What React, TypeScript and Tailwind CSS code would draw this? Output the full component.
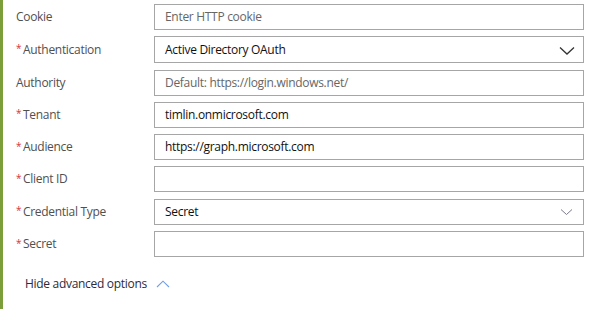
import React from "react";

const font = { fontFamily: '"Open Sans", "Noto Sans", sans-serif' };

function Label({ text, required }: { text: string; required?: boolean }) {
  return (
    <div className="w-[138px] flex items-center text-[12px] tracking-[-0.3px] text-[#505050] leading-none">
      {required ? (
        <span className="text-[#d13438] text-[10px] w-[7px] -mt-[3px]">*</span>
      ) : null}
      <span>{text}</span>
    </div>
  );
}

function Box({ children }: { children?: React.ReactNode }) {
  return (
    <div className="flex-1 h-[26px] border border-[#a6a6a6] bg-white flex items-center px-[10px] text-[12px] tracking-[-0.3px] leading-none">
      {children}
    </div>
  );
}

function Row({ label, required, children }: { label: string; required?: boolean; children?: React.ReactNode }) {
  return (
    <div className="flex items-center">
      <Label text={label} required={required} />
      {children}
    </div>
  );
}

export default function App() {
  return (
    <div className="w-[593px] h-[309px] bg-white flex" style={font}>
      <div className="w-[3px] h-full bg-[#7b9e3b]" />
      <div className="flex-1 pl-[13px] pr-[9px] pt-[4px] flex flex-col gap-[6.3px]">
        <Row label="Cookie">
          <Box>
            <span className="text-[#666666]">Enter HTTP cookie</span>
          </Box>
        </Row>
        <Row label="Authentication" required>
          <div className="flex-1 h-[27px] border border-[#a6a6a6] bg-white flex items-center justify-between pl-[10px] pr-[7px] text-[12px] tracking-[-0.3px] leading-none text-[#111]">
            <span>Active Directory OAuth</span>
            <svg width="18" height="10" viewBox="0 0 18 10" fill="none" className="mt-[3px]">
              <path d="M2 1.5 L9 8 L16 1.5" stroke="#333" strokeWidth="1.3" />
            </svg>
          </div>
        </Row>
        <Row label="Authority">
          <Box>
            <span className="text-[#666666]">Default: https://login.windows.net/</span>
          </Box>
        </Row>
        <Row label="Tenant" required>
          <Box>
            <span className="text-[#111]">timlin.onmicrosoft.com</span>
          </Box>
        </Row>
        <Row label="Audience" required>
          <Box>
            <span className="text-[#111]">https://graph.microsoft.com</span>
          </Box>
        </Row>
        <Row label="Client ID" required>
          <Box />
        </Row>
        <Row label="Credential Type" required>
          <div className="flex-1 h-[26px] border border-[#a6a6a6] bg-white flex items-center justify-between pl-[10px] pr-[10px] text-[12px] tracking-[-0.3px] leading-none text-[#111]">
            <span>Secret</span>
            <svg width="13" height="8" viewBox="0 0 13 8" fill="none">
              <path d="M1 1.5 L6.5 6.5 L12 1.5" stroke="#7a7a8a" strokeWidth="1" />
            </svg>
          </div>
        </Row>
        <Row label="Secret" required>
          <Box />
        </Row>
        <div className="flex items-center pl-[9px] mt-[15px] gap-[9px]">
          <span className="text-[12px] tracking-[-0.3px] text-[#2b2b3a] leading-none">Hide advanced options</span>
          <svg width="14" height="8" viewBox="0 0 14 8" fill="none">
            <path d="M1 7 L7 1.2 L13 7" stroke="#6f9fe6" strokeWidth="1.1" />
          </svg>
        </div>
      </div>
    </div>
  );
}
